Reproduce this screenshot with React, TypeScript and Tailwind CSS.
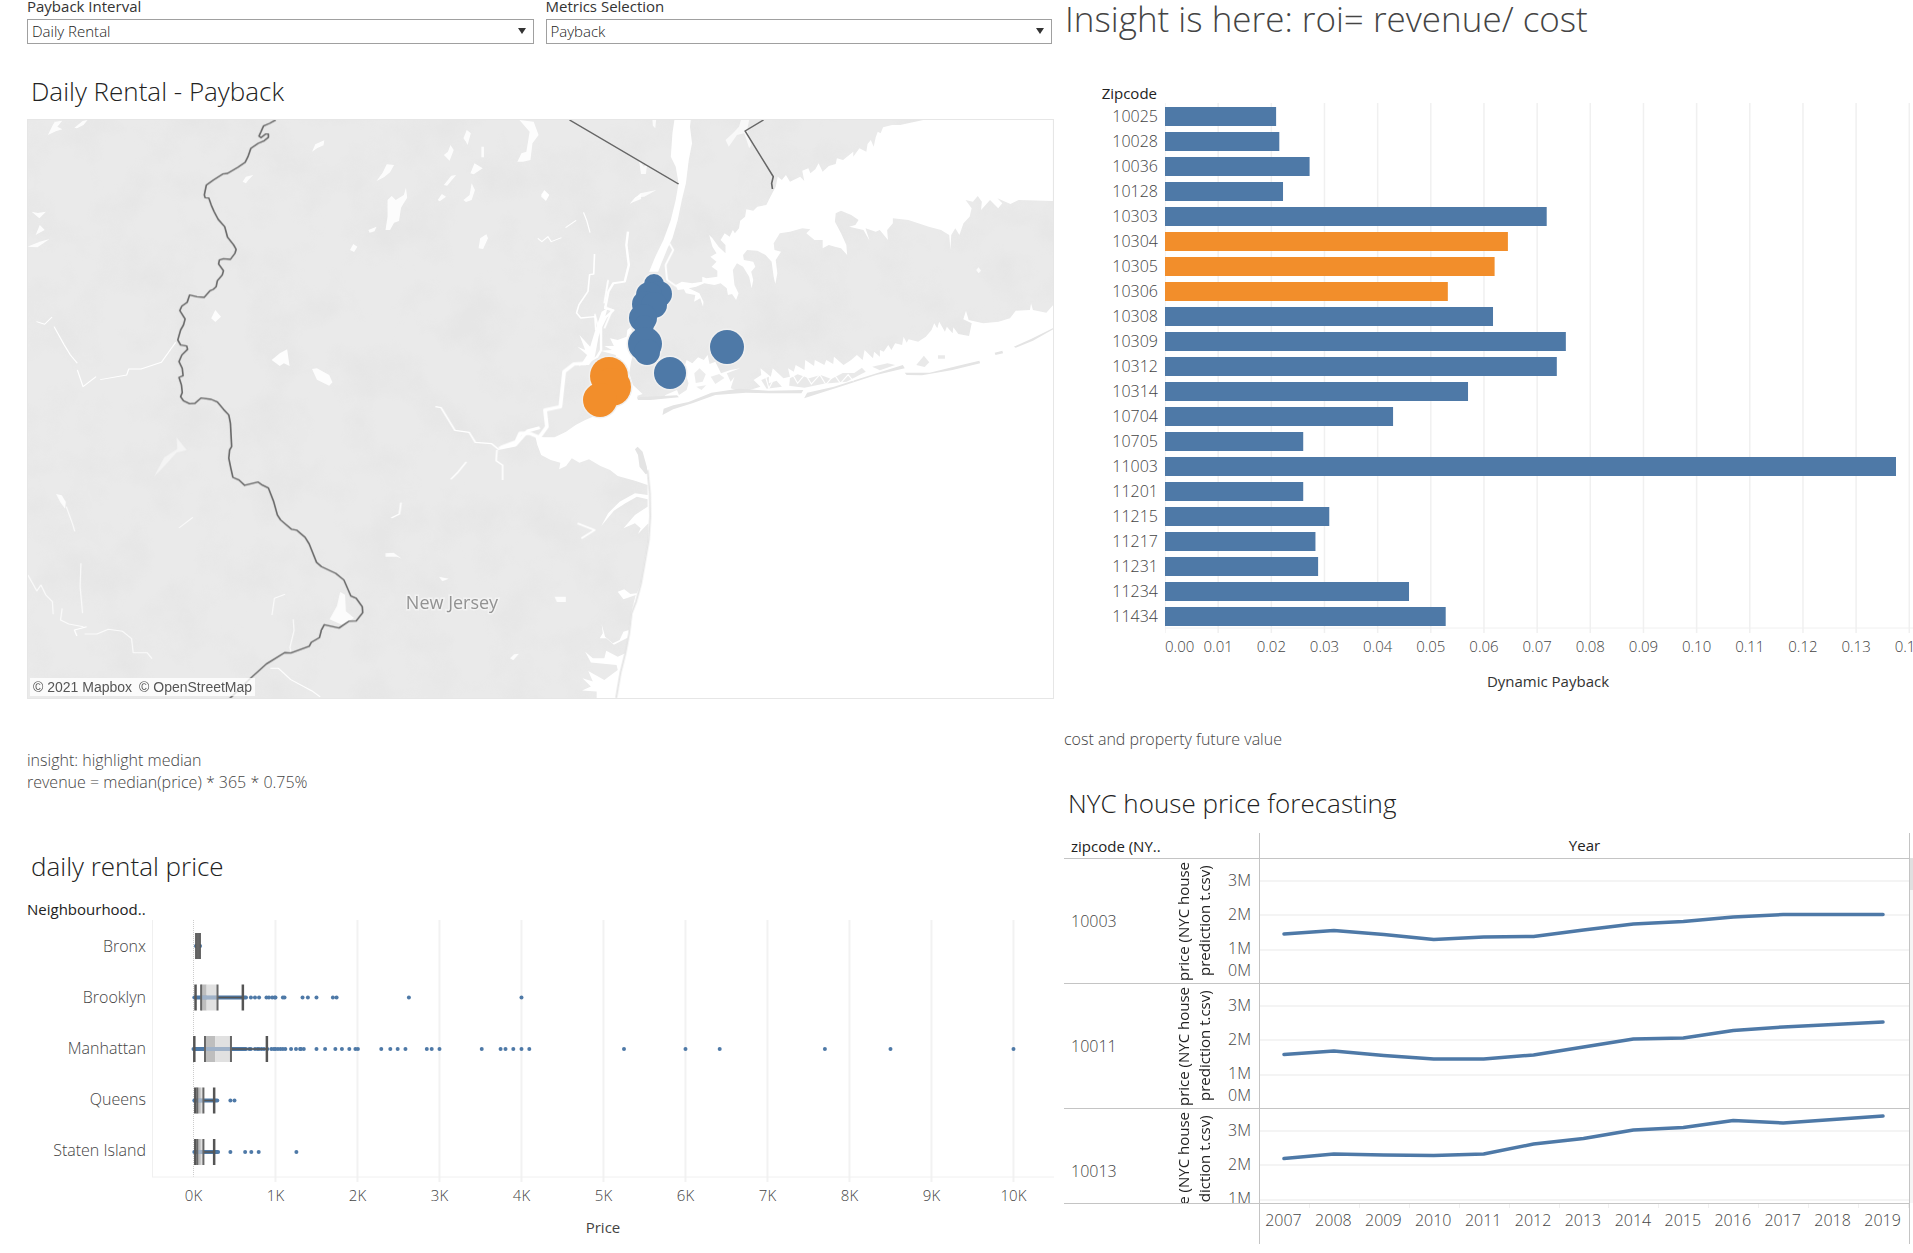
import React from "react";

const BLUE = "#4e79a7";
const ORANGE = "#f28e2b";

const zipBars: { zip: string; value: number; highlight?: boolean }[] = [
  { zip: "10025", value: 0.0209 },
  { zip: "10028", value: 0.0215 },
  { zip: "10036", value: 0.0272 },
  { zip: "10128", value: 0.0222 },
  { zip: "10303", value: 0.0718 },
  { zip: "10304", value: 0.0645, highlight: true },
  { zip: "10305", value: 0.062, highlight: true },
  { zip: "10306", value: 0.0532, highlight: true },
  { zip: "10308", value: 0.0617 },
  { zip: "10309", value: 0.0754 },
  { zip: "10312", value: 0.0737 },
  { zip: "10314", value: 0.057 },
  { zip: "10704", value: 0.0429 },
  { zip: "10705", value: 0.026 },
  { zip: "11003", value: 0.1375 },
  { zip: "11201", value: 0.026 },
  { zip: "11215", value: 0.0309 },
  { zip: "11217", value: 0.0283 },
  { zip: "11231", value: 0.0288 },
  { zip: "11234", value: 0.0459 },
  { zip: "11434", value: 0.0528 },
];

const PAYBACK_MAX = 0.1407;
const paybackX = (v: number) => `${(v / PAYBACK_MAX) * 100}%`;

const boroughs = [
  { name: "Bronx", dense: [30, 80], dots: [], low: 35, q1: 45, median: 55, q3: 65, high: 75 },
  {
    name: "Brooklyn", dense: [10, 640],
    dots: [700, 750, 800, 890, 920, 960, 990, 1000, 1090, 1110, 1330, 1395, 1500, 1700, 1745, 2627, 4000],
    low: 25, q1: 93, median: 160, q3: 293, high: 602,
  },
  {
    name: "Manhattan", dense: [0, 640],
    dots: [680, 700, 750, 780, 800, 830, 860, 900, 950, 980, 1000, 1030, 1060, 1090, 1120, 1190, 1250, 1300, 1310, 1345, 1500, 1605, 1730, 1810, 1900, 1975, 2005, 2290, 2400, 2490, 2585, 2845, 2905, 3000, 3515, 3745, 3805, 3900, 4000, 4095, 5250, 6000, 6417, 7700, 8500, 10000],
    low: 10, q1: 140, median: 265, q3: 457, high: 895,
  },
  { name: "Queens", dense: [10, 290], dots: [450, 500], low: 22, q1: 46, median: 90, q3: 121, high: 252 },
  { name: "Staten Island", dense: [10, 300], dots: [450, 630, 705, 795, 1255], low: 22, q1: 46, median: 90, q3: 121, high: 252 },
];

const priceX = (v: number) => `${((506 + v) / 11000) * 100}%`;

const years = [2007, 2008, 2009, 2010, 2011, 2012, 2013, 2014, 2015, 2016, 2017, 2018, 2019];

const forecasts = [
  { zip: "10003", clipped: false, y: [75, 71.5, 75.5, 80.5, 78, 77.5, 71, 65, 62.5, 58, 55.5, 55.5, 55.5] },
  { zip: "10011", clipped: false, y: [70.5, 67, 71.5, 75, 75, 71, 63, 55, 54, 46.5, 43, 40.5, 38] },
  { zip: "10013", clipped: true, y: [49.5, 45, 46, 46.5, 45, 35, 29.5, 21, 18.5, 11.5, 14, 10.5, 7] },
];

function ParameterSelect({ id, label, value, options }: { id: string; label: string; value: string; options: string[] }) {
  return (
    <div className="flex flex-1 flex-col">
      <label htmlFor={id} className="h-[19px] text-[15px] leading-3 font-medium text-[#333]">
        {label}
      </label>
      <div className="relative">
        <select
          id={id}
          defaultValue={value}
          className="h-[25px] w-full appearance-none border border-[#a0a0a0] bg-white pb-px pl-1 text-[15px] leading-[22px] font-light text-[#222]"
        >
          {options.map((o) => (
            <option key={o}>{o}</option>
          ))}
        </select>
        <svg className="pointer-events-none absolute top-[9px] right-2 h-[6px] w-2" viewBox="0 0 8 6" aria-hidden="true">
          <path d="M0 0h8L4 6z" fill="#333" />
        </svg>
      </div>
    </div>
  );
}

const mapDots = [
  { cx: 653, cy: 284, r: 10 },
  { cx: 658, cy: 294, r: 13 },
  { cx: 648, cy: 295, r: 13 },
  { cx: 644, cy: 304, r: 13 },
  { cx: 653, cy: 305, r: 13 },
  { cx: 642, cy: 318, r: 14 },
  { cx: 643, cy: 325, r: 10 },
  { cx: 644, cy: 344, r: 17 },
  { cx: 646, cy: 352, r: 13 },
  { cx: 669, cy: 373, r: 16 },
  { cx: 726, cy: 347, r: 17 },
];
const mapHighlights = [
  { cx: 608, cy: 376, r: 19 },
  { cx: 611, cy: 387, r: 19 },
  { cx: 599, cy: 400, r: 17 },
];

const WEST = "matrix(.4082 0 0 .3333 0 0)";
const SOUTHWEST = "matrix(.4082 0 0 .3333 0 340)";
const NORTHEAST = "matrix(.4082 0 0 .3333 540 0)";
const HARBOR = "matrix(.3827 0 0 .3333 500 240)";

function PaybackMap() {
  return (
    <div className="relative border border-[#e6e6e6]">
      <svg className="block h-auto w-full" viewBox="27 120 1025 578" role="img" aria-label="Map of New York and New Jersey">
        <defs>
          <filter id="terrain" x="0" y="0" width="100%" height="100%">
            <feTurbulence type="fractalNoise" baseFrequency=".02" numOctaves="4" seed="8" />
            <feColorMatrix values="0 0 0 0 .72  0 0 0 0 .72  0 0 0 0 .72  2.2 0 0 0 -.9" />
          </filter>
        </defs>
        <rect x="27" y="120" width="1025" height="578" fill="#eaeaea" />
        <rect x="27" y="120" width="1025" height="578" filter="url(#terrain)" opacity=".3" />

        <g fill="#fff" stroke="none">
          <g transform={NORTHEAST}>
            <path d="M945 358 905 368 880 375 860 375 838 382 832 400 825 395 820 412 815 440 808 420 800 432 797 455 780 445 765 470 765 455 740 480 725 475 722 492 705 498 690 515 680 490 672 508 660 520 655 505 640 512 645 543 635 530 610 545 600 525 590 540 580 530 575 560 562 590 552 615 530 620 520 632 503 628 500 650 488 662 485 685 475 700 470 690 462 710 450 700 440 720 452 735 452 760 435 740 420 715 412 705 420 740 430 760 415 770 430 785 418 800 432 812 432 830 405 835 395 830 395 845 370 850 345 845 330 855 335 870 350 868 355 880 378 885 375 905 390 895 397 920 398 905 388 880 362 865 380 860 400 850 425 855 440 850 455 865 458 885 468 882 478 900 484 880 474 855 470 810 480 790 495 800 510 830 516 865 520 840 515 815 525 800 520 785 497 780 495 765 505 750 530 752 550 765 565 785 570 830 574 852 579 820 575 780 588 755 572 750 570 730 585 700 610 695 640 685 660 688 650 700 670 720 690 720 690 745 705 735 720 740 735 745 750 765 748 735 735 700 720 665 722 640 735 632 760 645 778 660 770 675 755 680 790 690 805 722 795 685 820 695 830 690 850 720 848 690 862 670 862 655 900 660 950 680 980 690 1000 705 1003 750 1005 705 1015 685 1025 705 1035 670 1050 650 1055 625 1040 600 1058 605 1070 588 1080 605 1078 630 1100 600 1120 625 1130 610 1118 595 1150 612 1170 600 1254 603 1254 358Z" />
            <path d="M327 358 367 358 365 380 370 430 362 480 355 550 345 600 335 660 322 715 310 745 295 790 287 815 265 815 280 770 300 720 318 660 330 600 337 550 330 500 318 470 322 400Z" />
            <path d="m470 400 15-20 5-20 20 0-5 30 10 45-5 10-12-45-18 5-20 35-8-20Z" opacity=".7" />
            <path d="m240 480 12 20 8-8-3 30-12 0Z M273 360h9l-2 25-6-8Z M218 610l25-30 40-10-30 20-18 2Z M1066 810l6-8 6 10-6 8Z M0 590l8-18 12 12-8 18Z" opacity=".8" />
          </g>
          <g transform={HARBOR}>
            <path d="M1443 195 1425 218 1390 210 1385 190 1382 210 1345 212 1330 235 1300 245 1260 250 1222 240 1215 212 1208 238 1230 250 1223 288 1195 282 1182 262 1180 280 1165 260 1160 275 1145 245 1140 265 1132 250 1125 270 1110 290 1090 305 1065 298 1060 308 1052 290 1048 315 1030 310 1020 330 1012 315 1000 335 990 330 990 350 975 335 972 355 950 330 945 360 930 345 915 360 895 375 870 350 868 372 850 360 845 375 820 360 818 378 795 360 793 390 770 375 765 395 750 385 755 410 738 415 710 385 705 410 678 385 680 405 660 420 678 440 650 450 620 452 600 445 610 410 600 425 590 400 625 385 600 390 575 400 560 365 545 372 540 345 530 360 515 352 500 370 485 360 478 385 490 430 485 450 465 465 460 450 430 465 420 476 370 480 355 468 370 462 345 435 335 400 340 365 350 320 340 260 330 270 328 290 305 300 285 295 295 318 270 318 290 330 260 332 300 345 300 400 240 530 220 540 195 555 170 575 140 592 115 592 90 590 95 615 105 645 130 660 155 668 152 688 170 678 185 655 205 668 230 658 260 678 285 690 305 708 350 722 383 735 383 765 350 760 310 785 280 820 262 858 295 812 325 790 355 770 383 778 383 800 350 825 320 865 350 850 365 865 358 882 385 850 385 900 375 960 365 1030 355 1060 338 1062 322 1048 305 1055 320 1078 352 1065 340 1120 335 1170 320 1175 310 1200 292 1210 272 1190 263 1152 266 1180 258 1195 275 1195 295 1214 333 1192 325 1240 305 1250 275 1232 270 1255 240 1255 220 1235 235 1268 302 1275 305 1290 270 1320 228 1293 240 1325 213 1315 235 1340 212 1352 250 1355 250 1374 1443 1374Z" />
            <path d="m205 375 25 0 15-25 10-60 15-50 8-35-15 10-15 50-15 55-28-35 15 45-20-10 25 25-20 35Z" />
          </g>
          <g transform={WEST} opacity=".9">
            <path d="m115 405 12-30 5-10-18 4 36-7-12 18 12 8-16 6Z M180 383l20-20 12-3-10 15-16 10Z M762 455l8-22 22-12-2 15-15 8Z M920 543l15-25 10-25 18 2-10 22-15 15Z M592 545l8-15 18-5-12 15-6 10Z M942 690l5-40 0-50 10-12 10 12 20-15 5-22 3 30-10 20-5 10-5 40-12 5-10 22Z M900 690l20-10-5 14-12 4Z M855 750l8-18 10 8-8 16Z M1170 745l4-30 15-12 4 12-12 32Z M1133 415l8-25 10 10-8 35-4-10Z M1085 465l10-10 6-20 8 15-10 32Z M1177 440h6v32h-6Z M1085 555l18-28 12-2-22 32Z M1070 600l10-18 10 8-15 14Z M1133 600l15-15 5-35 8 20-8 30-14 6Z M1150 520l10-30 20 15-22 18Z M1265 485l10-25 12-5 8-60-25-35 35 5 12 40-15 25-5 50-18 5Z M1323 585l8-15 12 15-8 18Z M1540 612l14-20 14-10v15l-20 10Z" />
            <path d="m515 955 10-25 14 20-14 16Z M663 1080l20-20 18-12 6 50-14-8-10 8Z M762 1107l12-2 30 20 8 22-8 10-30-18Z M75 635l15 4 20-4-16 20Z M65 740l30-15 24-8-30 25Z M85 705l10-30 12 15-18 12Z" />
          </g>
          <g transform={SOUTHWEST} opacity=".85">
            <path d="m375 410 25-58 32-25-2-35 25 38-25 8-30 40Z" opacity=".6" />
            <path d="M805 838l18-40 8-42 12 8 2 50 20 20-30 20Z M942 640l20-2 20 18-12-6-28 0Z M1073 710l24 6-16 8Z M1356 770h28v16h-22Z M1247 955l10-12 12-2-14 20Z M135 462l14 4 10 20-2 20-12-20Z" />
          </g>
        </g>

        <g fill="none" stroke="#fff" strokeLinejoin="round">
          <g transform={WEST} strokeWidth="4">
            <path d="m1454 762-2 60-10 2-4 50-22 40-6 25 10 15 35-4 2 40" />
            <path d="m1536 695-4 40 6 60-10 50-28 5-12 25-8 50 20 6-18 20-12 30 0 70-10 20-30 20" strokeWidth="6" />
            <path d="m130 980 25 55 15 30 17 25M187 1110l14 50 32-30M243 1139l65-14 5-18 30 0 50-20 35-60M87 965l20 8 18-22" strokeWidth="3" />
            <path d="m1315 715 10 10 15-15 8 15 25-12M1383 683l26-22M1427 637l8 25 8 36" strokeWidth="3" />
          </g>
          <g transform={HARBOR}>
            <path d="M222 370 190 372 165 395 155 500 115 510 120 560 100 592 75 580 50 580 40 605 0 622" strokeWidth="10" />
            <path d="m440 10 10 20-20 45 4 45 26 20" strokeWidth="5" />
            <path d="m245 222 10 45M270 200 290 210 270 265M280 120l-10 70M200 850l45 20-35 25" strokeWidth="5" />
          </g>
          <g transform={SOUTHWEST} strokeWidth="3">
            <path d="m1064 200 14 3 34 68 35 6 15 30 40 4 18 18" strokeWidth="4" />
            <path d="m1220 325 40-10 30-42 30-10" strokeWidth="9" />
            <path d="m1215 330-2 32 16 14 0 44M1140 366l-20 30-18 22M980 488l-4 34-20 12" strokeWidth="4" />
            <path d="m66 705 22 48 10-18 12 30 16 20 2 38M150 805l-4 35 20 12 36 8M205 882l30 0 28-14 35 6 22 22 4 42 34 0 12 18M200 820l-6-80 2-70M160 500l15 50 6 24M470 532l-34 32M664 825l6-50 26-12M716 838l2 34-10 50 2 12" opacity=".8" />
            <path d="m660 985 20 0 30 34 52 34 20 18M210 860l-30 10 6 18" />
          </g>
        </g>

        <g fill="none" stroke="#e4e4e4" strokeWidth="5" transform={HARBOR}>
          <path d="M383 690 389 760 390 830 386 900 376 965 366 1030 353 1085 341 1120 335 1180 325 1240 312 1300 301 1374" />
        </g>
        <g fill="#e4e4e4" transform={HARBOR}>
          <path d="M350 628 357 620 370 635 381 680 383 700 378 703 362 680 358 645Z" />
          <path d="M355 472 460 466 465 472 390 480 358 480Z" />
          <path d="M422 525 425 506 450 496 490 486 550 458 620 446 700 452 790 450 785 460 700 460 640 458 560 465 500 490 450 508Z" />
          <path d="M792 475 800 458 870 440 940 415 1050 375 1055 385 980 405 900 435Z" />
          <path d="M1055 398 1120 398 1200 376 1250 362 1252 370 1180 390 1100 406 1060 405Z M1290 338l20-6 2 8-20 5Z M1340 320 1385 297 1443 264 1443 268 1390 302 1345 323Z" />
          <path d="m680 420 20-10 0 20 20-8 14 18-40 6Z M755 415l20-12 30 12 30-10 28 12 30-18 30 0 20-16 10 12-50 30-60 6-50 12-40-6Z M970 380l40-10 20 5-40 16Z M1085 375l20-28 14 20-12 14Z M1142 346h18v10h-18Z" opacity=".8" />
          <path d="m505 400 14-15 16 18-8 22-18 4Z M548 410l22-8 14 12-24 18Z M510 440l26-4-12 14Z" opacity=".7" />
        </g>
        <g fill="none" stroke="#fff" strokeWidth="3" transform={HARBOR}>
          <path d="m760 400 15 30 20-28 16 30 22-28 16 30 22-30 16 26 20-26 14 20M690 405l10 40 14-30" />
        </g>

        <g fill="none" stroke="#666" strokeWidth="4" strokeLinejoin="round">
          <path transform={WEST} d="M673 360 658 370 643 378 637 395 632 408 637 413 648 402 655 402 655 412 645 422 630 430 612 445 605 470 598 487 580 502 555 520 543 522 520 540 503 555 498 585 500 593 509 594 515 615 522 635 532 658 548 680 555 712 570 735 576 748 573 760 562 778 545 776 535 780 533 792 545 812 542 825 530 842 527 860 520 868 512 872 498 892 480 890 462 885 456 907 443 918 438 932 451 957 447 975 440 990 433 1020 440 1035 455 1038 457 1048 443 1065 436 1085 444 1105 446 1127 436 1132 442 1155 444 1178 440 1190 447 1202 462 1211 475 1210 490 1194 515 1198 530 1206 545 1228 558 1245 562 1270 565 1340 560 1350 558 1375 563 1405 568 1432 583 1440 597 1456 630 1446 640 1455 655 1464 668 1505 677 1545 685 1560 712 1588 725 1591 745 1612 755 1632 773 1687 785 1700 820 1720 840 1740 857 1788 870 1795 885 1820 886 1838 870 1863 852 1864 828 1884 792 1874 785 1890 780 1913 760 1927 755 1939 710 1959 695 1958 650 1992 612 2034 560 2096" />
          <path transform={NORTHEAST} d="M70 360 337 552M545 360 500 393 569 530 565 550 567 567" />
        </g>

        <g fill="#f0f0f0">
          {[...mapDots, ...mapHighlights].map((d, i) => (
            <circle key={i} cx={d.cx} cy={d.cy} r={d.r + 1.5} />
          ))}
        </g>
        <g fill={BLUE}>
          {mapDots.map((d, i) => (
            <circle key={i} cx={d.cx} cy={d.cy} r={d.r} />
          ))}
        </g>
        <g fill={ORANGE}>
          {mapHighlights.map((d, i) => (
            <circle key={i} cx={d.cx} cy={d.cy} r={d.r} />
          ))}
        </g>
        <text x="451" y="609" textAnchor="middle" fontSize="18" fill="#929292" stroke="#f2f2f2" strokeWidth="3" paintOrder="stroke">
          New Jersey
        </text>
      </svg>
      <div className="absolute bottom-[2px] left-[2px] flex gap-[7px] bg-white/80 px-[3px] font-['Liberation_Sans',sans-serif] text-[14px] leading-[18px] text-[#555]">
        <a href="#mapbox">© 2021 Mapbox</a>
        <a href="#openstreetmap">© OpenStreetMap</a>
      </div>
    </div>
  );
}

function PaybackBars() {
  const ticks = Array.from({ length: 15 }, (_, i) => i / 100);
  return (
    <section className="mt-[45px]">
      <h3 className="w-[93px] text-right text-[15px] leading-5 font-medium text-[#222]">Zipcode</h3>
      <div className="flex">
        <ul className="w-[101px] shrink-0 pt-px pr-[7px] text-right text-[16px] leading-[25px] font-light text-[#444]">
          {zipBars.map((b) => (
            <li key={b.zip}>{b.zip}</li>
          ))}
        </ul>
        <svg className="h-[594px] min-w-0 flex-1 overflow-hidden" role="img" aria-label="Dynamic payback by zipcode">
          {ticks.map((t) => (
            <line key={t} x1={paybackX(t)} x2={paybackX(t)} y1="0" y2="530" stroke="#f0f0f0" strokeWidth="1.5" />
          ))}
          <line x1="0" x2="100%" y1="525" y2="525" stroke="#f0f0f0" />
          {zipBars.map((b, i) => (
            <rect
              key={b.zip}
              x="0"
              y={i * 25 + 4}
              width={paybackX(b.value)}
              height="19"
              fill={b.highlight ? ORANGE : BLUE}
            />
          ))}
          <g fontSize="15" fontWeight="300" fill="#444">
            {ticks.map((t, i) => (
              <text key={t} x={paybackX(t)} y="549" textAnchor={i === 0 ? "start" : "middle"}>
                {t.toFixed(2)}
              </text>
            ))}
          </g>
          <text x="51.2%" y="584" textAnchor="middle" fontSize="15" fontWeight="500" fill="#333">
            Dynamic Payback
          </text>
        </svg>
      </div>
    </section>
  );
}

function RentalBoxPlot() {
  const thousands = [0, 1, 2, 3, 4, 5, 6, 7, 8, 9, 10];
  return (
    <section>
      <h3 className="text-[15px] leading-[21px] font-medium text-[#222]">Neighbourhood..</h3>
      <div className="flex">
        <ul className="w-[125px] shrink-0 pt-px pr-[6px] text-right text-[16px] leading-[51px] font-light text-[#444]">
          {boroughs.map((b) => (
            <li key={b.name}>{b.name}</li>
          ))}
        </ul>
        <svg className="h-[322px] min-w-0 flex-1 overflow-hidden" role="img" aria-label="Daily rental price by neighbourhood">
          <line x1="0" x2="0" y1="0" y2="257" stroke="#f0f0f0" strokeWidth="2" />
          {thousands.map((t) => (
            <line
              key={t}
              x1={priceX(t * 1000)}
              x2={priceX(t * 1000)}
              y1="0"
              y2={t === 0 ? 257 : 262}
              stroke={t === 0 ? "#ccc" : "#f2f2f2"}
              strokeWidth={t === 0 ? 1 : 2}
              strokeDasharray={t === 0 ? "1 1" : undefined}
            />
          ))}
          <line x1="0" x2="100%" y1="257" y2="257" stroke="#f0f0f0" />
          {boroughs.map((b, i) => {
            const y = 26 + i * 51.5;
            const span = (a: number, c: number) => `${((c - a) / 11000) * 100}%`;
            return (
              <g key={b.name}>
                <line x1={priceX(b.dense[0])} x2={priceX(b.dense[1])} y1={y} y2={y} stroke={BLUE} strokeWidth="4" strokeLinecap="round" />
                {b.dots.map((d, k) => (
                  <circle key={k} cx={priceX(d)} cy={y} r="2" fill={BLUE} />
                ))}
                <line x1={priceX(b.q3)} x2={priceX(b.high)} y1={y} y2={y} stroke="#555" strokeWidth="1.5" />
                <rect x={priceX(b.q1)} y={y - 13} width={span(b.q1, b.median)} height="26" fill="#b3b3b3" fillOpacity=".85" />
                <rect x={priceX(b.median)} y={y - 13} width={span(b.median, b.q3)} height="26" fill="#dcdcdc" fillOpacity=".85" />
                <line x1={priceX(b.q1)} x2={priceX(b.q3)} y1={y} y2={y} stroke="#a0b2c8" strokeWidth="4" />
                {[b.low, b.high].map((v, k) => (
                  <line key={k} x1={priceX(v)} x2={priceX(v)} y1={y - 13} y2={y + 13} stroke="#555" strokeWidth="2.5" />
                ))}
                {[b.q1, b.q3].map((v, k) => (
                  <line key={k} x1={priceX(v)} x2={priceX(v)} y1={y - 13} y2={y + 13} stroke="#666" strokeWidth="2" />
                ))}
              </g>
            );
          })}
          <g fontSize="15" fontWeight="300" fill="#444" textAnchor="middle">
            {thousands.map((t) => (
              <text key={t} x={priceX(t * 1000)} y="281">
                {t}K
              </text>
            ))}
          </g>
          <text x="50%" y="313" textAnchor="middle" fontSize="15" fontWeight="500" fill="#444">
            Price
          </text>
        </svg>
      </div>
    </section>
  );
}

function ForecastRow({ zip, y, clipped }: { zip: string; y: number[]; clipped: boolean }) {
  return (
    <div className={clipped ? "h-[95px] overflow-hidden border-b border-[#c4c4c4]" : "h-[125px] overflow-hidden border-b border-[#c4c4c4]"}>
      <div className="flex h-[125px]">
        <div className="flex w-[107px] shrink-0 items-center pb-[2px] pl-[7px] text-[16px] font-light text-[#444]">{zip}</div>
        <div className="flex w-[46px] shrink-0 rotate-180 items-center justify-center pt-px text-center text-[15px] leading-[21px] text-[#222] [writing-mode:vertical-rl]">
          price (NYC house
          <br />
          prediction t.csv)
        </div>
        <div className="flex w-[42px] shrink-0 flex-col items-end pt-[10px] pr-2 text-[16px] leading-[22px] font-light text-[#444]">
          <span>3M</span>
          <span className="mt-3">2M</span>
          <span className="mt-3">1M</span>
          <span>0M</span>
        </div>
        <div className="min-w-0 flex-1 border-l border-[#c4c4c4]">
          <svg className="block h-[125px] w-full" viewBox="0 0 650 125" preserveAspectRatio="none" role="img" aria-label={`Price forecast for ${zip}`}>
            {[22, 56, 91].map((g) => (
              <line key={g} x1="0" x2="650" y1={g} y2={g} stroke="#f4f4f4" strokeWidth="2" />
            ))}
            <polyline
              points={y.map((v, i) => `${24 + i * 50},${v}`).join(" ")}
              fill="none"
              stroke={BLUE}
              strokeWidth="3.5"
              strokeLinejoin="round"
              strokeLinecap="round"
            />
          </svg>
        </div>
      </div>
    </div>
  );
}

function ForecastPanel() {
  return (
    <section className="flex">
      <div className="min-w-0 flex-1 border-r border-[#c4c4c4]">
        <div className="flex h-[26px] border-b border-[#c4c4c4] text-[15px] leading-[27px] font-medium text-[#222]">
          <div className="w-[195px] shrink-0 pl-[7px]">zipcode (NY..</div>
          <div className="flex-1 border-l border-[#c4c4c4] text-center leading-6">Year</div>
        </div>
        {forecasts.map((f) => (
          <ForecastRow key={f.zip} {...f} />
        ))}
        <div className="flex">
          <div className="w-[195px] shrink-0" />
          <div className="grid h-10 flex-1 grid-cols-[repeat(13,1fr)] border-l border-[#c4c4c4]">
            {years.map((year) => (
              <div key={year} className="flex flex-col items-center">
                <span className="h-1 w-full border-r border-[#f0f0f0]" />
                <span className="pr-[3px] text-[16px] leading-6 font-light text-[#444]">{year}</span>
              </div>
            ))}
          </div>
        </div>
      </div>
      <div className="mt-[25px] h-[345px] w-[3px] bg-[#f5f5f5]">
        <div className="h-8 bg-[#e0e0e0]" />
      </div>
    </section>
  );
}

export default function App() {
  return (
    <main className="grid grid-cols-[1027fr_849fr] gap-x-[10px] bg-white pl-[27px] font-['Open_Sans','Noto_Sans',sans-serif]">
      <div className="min-w-0">
        <form className="flex gap-3 pr-[2px]">
          <ParameterSelect id="interval" label="Payback Interval" value="Daily Rental" options={["Daily Rental", "Monthly Rental", "Yearly Rental"]} />
          <ParameterSelect id="metrics" label="Metrics Selection" value="Payback" options={["Payback", "Revenue", "Cost"]} />
        </form>
        <h2 className="mt-[29px] h-[46px] pl-1 text-[26px] leading-[36px] font-light text-[#222]">Daily Rental - Payback</h2>
        <PaybackMap />
        <p className="mt-[50px] text-[16px] leading-[22px] font-light text-[#444]">
          insight: highlight median
          <br />
          revenue = median(price) * 365 * 0.75%
        </p>
        <h2 className="mt-[56px] mb-[16px] pl-1 text-[26px] leading-[34px] font-light text-[#222]">daily rental price</h2>
        <RentalBoxPlot />
      </div>
      <div className="min-w-0">
        <h1 className="pl-px text-[35px] leading-[38px] font-light text-[#444]">Insight is here: roi= revenue/ cost</h1>
        <PaybackBars />
        <p className="mt-[31px] text-[16px] leading-[22px] font-light text-[#444]">cost and property future value</p>
        <h2 className="mt-[36px] mb-[13px] pl-1 text-[26px] leading-[34px] font-light text-[#222]">NYC house price forecasting</h2>
        <ForecastPanel />
      </div>
    </main>
  );
}
